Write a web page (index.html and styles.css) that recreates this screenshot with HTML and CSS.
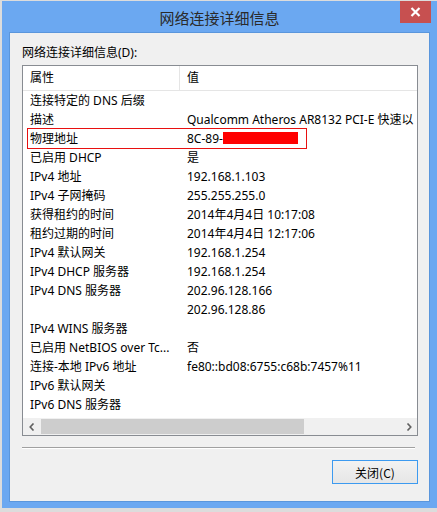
FILE: index.html
```html
<!DOCTYPE html>
<html lang="zh-CN">
<head>
<meta charset="utf-8">
<title>网络连接详细信息</title>
<link rel="stylesheet" href="styles.css">
</head>
<body>
<div class="window">
  <div class="titlebar">
    <span class="title">网络连接详细信息</span>
    <div class="close">
      <svg width="11" height="10" viewBox="0 0 11 10"><path d="M1.5 1 L9.5 9 M9.5 1 L1.5 9" stroke="#fff" stroke-width="2.2" fill="none"/></svg>
    </div>
  </div>
  <div class="client">
    <div class="label">网络连接详细信息(D):</div>
    <div class="listbox">
      <div class="header">
        <div class="hcell c1">属性</div>
        <div class="hcell c2">值</div>
      </div>
      <div class="rows">
        <div class="row"><div class="c1">连接特定的 DNS 后缀</div><div class="c2"></div></div>
        <div class="row"><div class="c1">描述</div><div class="c2">Qualcomm Atheros AR8132 PCI-E 快速以</div></div>
        <div class="row hl"><div class="c1">物理地址</div><div class="c2">8C-89-<span class="redact"></span></div><div class="mark"></div></div>
        <div class="row"><div class="c1">已启用 DHCP</div><div class="c2">是</div></div>
        <div class="row"><div class="c1">IPv4 地址</div><div class="c2">192.168.1.103</div></div>
        <div class="row"><div class="c1">IPv4 子网掩码</div><div class="c2">255.255.255.0</div></div>
        <div class="row"><div class="c1">获得租约的时间</div><div class="c2">2014年4月4日 10:17:08</div></div>
        <div class="row"><div class="c1">租约过期的时间</div><div class="c2">2014年4月4日 12:17:06</div></div>
        <div class="row"><div class="c1">IPv4 默认网关</div><div class="c2">192.168.1.254</div></div>
        <div class="row"><div class="c1">IPv4 DHCP 服务器</div><div class="c2">192.168.1.254</div></div>
        <div class="row"><div class="c1">IPv4 DNS 服务器</div><div class="c2">202.96.128.166</div></div>
        <div class="row"><div class="c1"></div><div class="c2">202.96.128.86</div></div>
        <div class="row"><div class="c1">IPv4 WINS 服务器</div><div class="c2"></div></div>
        <div class="row"><div class="c1">已启用 NetBIOS over Tc...</div><div class="c2">否</div></div>
        <div class="row"><div class="c1">连接-本地 IPv6 地址</div><div class="c2">fe80::bd08:6755:c68b:7457%11</div></div>
        <div class="row"><div class="c1">IPv6 默认网关</div><div class="c2"></div></div>
        <div class="row"><div class="c1">IPv6 DNS 服务器</div><div class="c2"></div></div>
      </div>
      <div class="hscroll">
        <div class="arrow">
          <svg width="6" height="8" viewBox="0 0 6 8"><path d="M4.5 0.5 L1.2 4 L4.5 7.5" stroke="#606060" stroke-width="1.6" fill="none"/></svg>
        </div>
        <div class="track"><div class="thumb"></div></div>
        <div class="arrow">
          <svg width="6" height="8" viewBox="0 0 6 8"><path d="M1.5 0.5 L4.8 4 L1.5 7.5" stroke="#606060" stroke-width="1.6" fill="none"/></svg>
        </div>
      </div>
    </div>
    <div class="separator"></div>
    <div class="buttons">
      <button class="btn">关闭(C)</button>
    </div>
  </div>
</div>
</body>
</html>
```

FILE: styles.css
```css
html, body {
  margin: 0;
  padding: 0;
}
body {
  background: #dcdcdc;
  width: 437px;
  height: 512px;
  overflow: hidden;
  font-family: "Noto Sans", "Noto Sans CJK SC", sans-serif;
  font-size: 12px;
  color: #000;
}
.window {
  margin: 1px 0 0 2px;
  width: 435px;
  height: 507px;
  background: #6ba8f1;
  box-sizing: border-box;
  padding: 0 7px 6px 7px;
  display: flex;
  flex-direction: column;
}
.titlebar {
  height: 31px;
  position: relative;
  display: flex;
  align-items: center;
  justify-content: center;
  flex: none;
}
.title {
  font-family: "Noto Sans CJK SC", sans-serif;
  font-size: 15px;
  color: #2a2a2a;
  margin-top: 1px;
}
.close {
  position: absolute;
  right: -1px;
  top: 0;
  width: 31px;
  height: 22px;
  background: #c75050;
  display: flex;
  align-items: center;
  justify-content: center;
}
.client {
  flex: 1;
  background: #f0f0f0;
  border: 1px solid #5a96dc;
  box-sizing: border-box;
  padding: 12px 11px 0 12px;
  display: flex;
  flex-direction: column;
}
.label {
  height: 16px;
  line-height: 16px;
  margin-bottom: 4px;
  color: #000;
}
.listbox {
  height: 371px;
  background: #fff;
  border: 1px solid #888c92;
  box-sizing: border-box;
  display: flex;
  flex-direction: column;
  overflow: hidden;
}
.header {
  display: flex;
  height: 24px;
  border-bottom: 1px solid #e5e5e5;
  flex: none;
}
.hcell {
  line-height: 24px;
}
.header .c1 {
  width: 149px;
  padding-left: 7px;
  border-right: 1px solid #e5e5e5;
}
.header .c2 {
  padding-left: 7px;
}
.rows {
  flex: 1;
  overflow: hidden;
}
.row {
  display: flex;
  height: 19px;
  line-height: 19px;
  white-space: nowrap;
  position: relative;
}
.row .c1 {
  width: 157px;
  padding-left: 7px;
  flex: none;
  overflow: hidden;
}
.row .c2 {
  flex: 1;
  overflow: hidden;
}
.redact {
  display: inline-block;
  width: 75px;
  height: 12px;
  background: #ff0000;
  vertical-align: -1px;
}
.mark {
  position: absolute;
  left: 4px;
  top: -1px;
  width: 280px;
  height: 21px;
  border: 1px solid #e81010;
  box-sizing: border-box;
}
.hscroll {
  height: 17px;
  flex: none;
  display: flex;
  background: #f0f0f0;
}
.arrow {
  width: 17px;
  display: flex;
  align-items: center;
  justify-content: center;
  flex: none;
}
.track {
  flex: 1;
  display: flex;
  padding: 1px 0;
  box-sizing: border-box;
}
.thumb {
  width: 263px;
  margin-left: 1px;
  background: #cdcdcd;
}
.separator {
  margin-top: 11px;
  height: 0;
  border-top: 1px solid #a0a0a0;
  border-bottom: 1px solid #fff;
  margin-right: 3px;
}
.buttons {
  display: flex;
  justify-content: flex-end;
  margin-top: 11px;
}
.btn {
  width: 86px;
  height: 24px;
  border: 1px solid #3c9af0;
  background: linear-gradient(#f2f2f2, #e6e6e6);
  font-family: "Noto Sans CJK SC", sans-serif;
  font-size: 12px;
  color: #000;
  padding: 0;
  margin: 0;
}
```
